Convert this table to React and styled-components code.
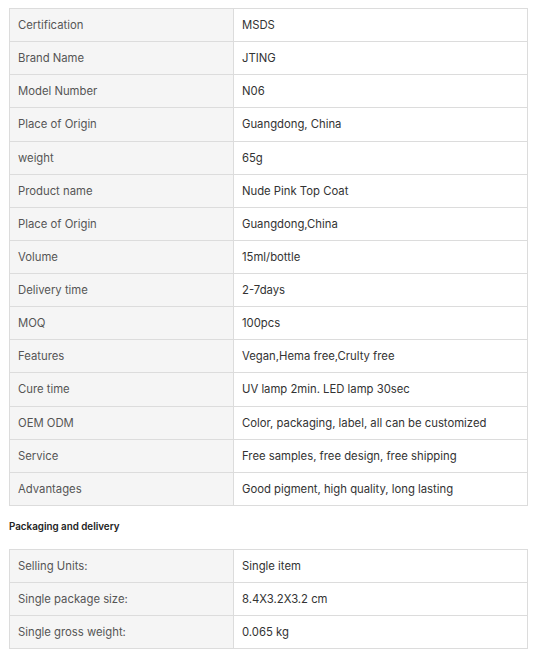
import React from "react";
import styled, { createGlobalStyle } from "styled-components";

const Global = createGlobalStyle`
  html, body { margin: 0; padding: 0; background: #fff; }
  body { font-family: Inter, "Noto Sans", sans-serif; color: #333; }
`;

const Page = styled.div`
  padding: 8px 10px 0 9px;
`;

const Table = styled.table`
  width: 100%;
  border-collapse: collapse;
  font-size: 11.3px;
  table-layout: fixed;
`;

const Row = styled.tr`
  height: 33.14px;
`;

const Label = styled.td`
  width: 207px;
  background: #f5f5f5;
  border: 1px solid #dcdcdc;
  padding: 0 8px;
  color: #555;
  vertical-align: middle;
`;

const Value = styled.td`
  background: #fff;
  border: 1px solid #dcdcdc;
  padding: 0 8px;
  color: #333;
  vertical-align: middle;
`;

const Heading = styled.div`
  font-size: 9.8px;
  font-weight: 600;
  color: #222;
  padding: 15px 0 16px;
  line-height: 12px;
`;

const specs = [
  ["Certification", "MSDS"],
  ["Brand Name", "JTING"],
  ["Model Number", "N06"],
  ["Place of Origin", "Guangdong, China"],
  ["weight", "65g"],
  ["Product name", "Nude Pink Top Coat"],
  ["Place of Origin", "Guangdong,China"],
  ["Volume", "15ml/bottle"],
  ["Delivery time", "2-7days"],
  ["MOQ", "100pcs"],
  ["Features", "Vegan,Hema free,Crulty free"],
  ["Cure time", "UV lamp 2min. LED lamp 30sec"],
  ["OEM ODM", "Color, packaging, label, all can be customized"],
  ["Service", "Free samples, free design, free shipping"],
  ["Advantages", "Good pigment, high quality, long lasting"],
];

const packaging = [
  ["Selling Units:", "Single item"],
  ["Single package size:", "8.4X3.2X3.2 cm"],
  ["Single gross weight:", "0.065 kg"],
];

const SpecTable = ({ rows }) => (
  <Table>
    <tbody>
      {rows.map(([k, v], i) => (
        <Row key={i}>
          <Label>{k}</Label>
          <Value>{v}</Value>
        </Row>
      ))}
    </tbody>
  </Table>
);

export default function App() {
  return (
    <Page>
      <Global />
      <SpecTable rows={specs} />
      <Heading>Packaging and delivery</Heading>
      <SpecTable rows={packaging} />
    </Page>
  );
}
